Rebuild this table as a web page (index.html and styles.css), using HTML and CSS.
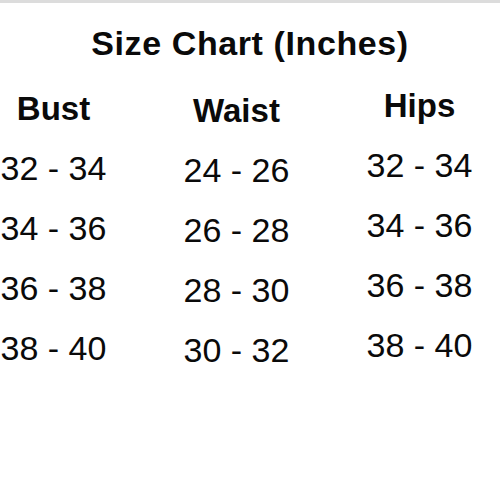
FILE: index.html
```html
<!DOCTYPE html>
<html>
<head>
<meta charset="utf-8">
<link rel="stylesheet" href="styles.css">
</head>
<body>
<div class="page">
  <h1 class="title">Size Chart (Inches)</h1>
  <div class="chart">
    <div class="col col-bust">
      <div class="head">Bust</div>
      <div class="val">32 - 34</div>
      <div class="val">34 - 36</div>
      <div class="val">36 - 38</div>
      <div class="val">38 - 40</div>
    </div>
    <div class="col col-waist">
      <div class="head">Waist</div>
      <div class="val">24 - 26</div>
      <div class="val">26 - 28</div>
      <div class="val">28 - 30</div>
      <div class="val">30 - 32</div>
    </div>
    <div class="col col-hips">
      <div class="head">Hips</div>
      <div class="val">32 - 34</div>
      <div class="val">34 - 36</div>
      <div class="val">36 - 38</div>
      <div class="val">38 - 40</div>
    </div>
  </div>
</div>
</body>
</html>
```

FILE: styles.css
```css
html, body {
  margin: 0;
  padding: 0;
  background: #ffffff;
}

.page {
  width: 500px;
  height: 500px;
  box-sizing: border-box;
  border-top: 3px solid #dcdcdc;
  font-family: "Liberation Sans", Arial, sans-serif;
  color: #0a0a0a;
  overflow: hidden;
}

.title {
  margin: 0;
  padding-top: 20px;
  font-size: 34px;
  line-height: 40px;
  font-weight: bold;
  letter-spacing: 0.6px;
  text-align: center;
}

.chart {
  display: grid;
  grid-template-columns: 183px 183px 183px;
  margin-left: -38px;
  margin-top: 26px;
}

.col {
  display: flex;
  flex-direction: column;
  align-items: center;
}

.col-waist {
  margin-top: 2px;
}

.col-hips {
  margin-top: -3px;
}

.head {
  font-size: 33px;
  line-height: 40px;
  font-weight: bold;
  margin-bottom: 9px;
}

.val {
  font-size: 34px;
  line-height: 60px;
  white-space: nowrap;
}
```
